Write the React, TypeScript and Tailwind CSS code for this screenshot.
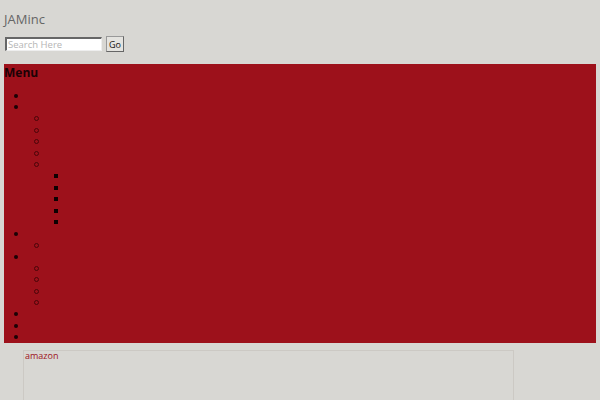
const menu: { level: 1 | 2 | 3 }[] = [
  { level: 1 }, { level: 1 },
  { level: 2 }, { level: 2 }, { level: 2 }, { level: 2 }, { level: 2 },
  { level: 3 }, { level: 3 }, { level: 3 }, { level: 3 }, { level: 3 },
  { level: 1 }, { level: 2 },
  { level: 1 }, { level: 2 }, { level: 2 }, { level: 2 }, { level: 2 },
  { level: 1 }, { level: 1 }, { level: 1 },
];

function Marker({ level }: { level: 1 | 2 | 3 }) {
  if (level === 1) return <span className="block h-[4px] w-[4px] rounded-full bg-[#1a0205]" />;
  if (level === 2) return <span className="block h-[5px] w-[5px] rounded-full border border-[#4a0509]" />;
  return <span className="block h-[4px] w-[4px] bg-[#0d0102]" />;
}

export default function App() {
  return (
    <div className="min-h-[400px] bg-[#d8d7d3] font-['Open_Sans','Noto_Sans',sans-serif]">
      <div className="px-[4px] pt-[10px] text-[13px] leading-[18px] text-[#666]">JAMinc</div>

      <form className="mt-[8px] flex items-center gap-[4px] pl-[5px]">
        <input
          placeholder="Search Here"
          className="h-[14px] w-[97px] border border-t-[2px] border-l-[2px] border-[#666] border-b-[#eee] border-r-[#eee] bg-white px-[1px] text-[9.5px] leading-none text-[#333] placeholder:text-[#b5b5b5]"
        />
        <button
          type="button"
          className="h-[16px] w-[18px] border border-[#999] border-b-[#666] border-r-[#666] bg-[#e4e3df] text-[9px] leading-none text-[#111]"
        >
          Go
        </button>
      </form>

      <nav className="mx-[4px] mt-[12px] h-[279px] bg-[#9d111b]">
        <h3 className="pt-[1px] text-[12px] font-bold leading-[16px] text-[#1a0205]">Menu</h3>
        <ul className="mt-[9px]">
          {menu.map((item, i) => (
            <li
              key={i}
              className={
                "flex h-[11.5px] items-center " +
                (item.level === 1 ? "pl-[10px]" : item.level === 2 ? "pl-[30px]" : "pl-[50px]")
              }
            >
              <Marker level={item.level} />
            </li>
          ))}
        </ul>
      </nav>

      <div className="ml-[23px] mt-[7px] h-[60px] w-[491px] border border-[#ccc9c4] px-[1px] text-[9px] leading-[10px]">
        <a className="text-[#9d111b]">amazon</a>
      </div>
    </div>
  );
}
